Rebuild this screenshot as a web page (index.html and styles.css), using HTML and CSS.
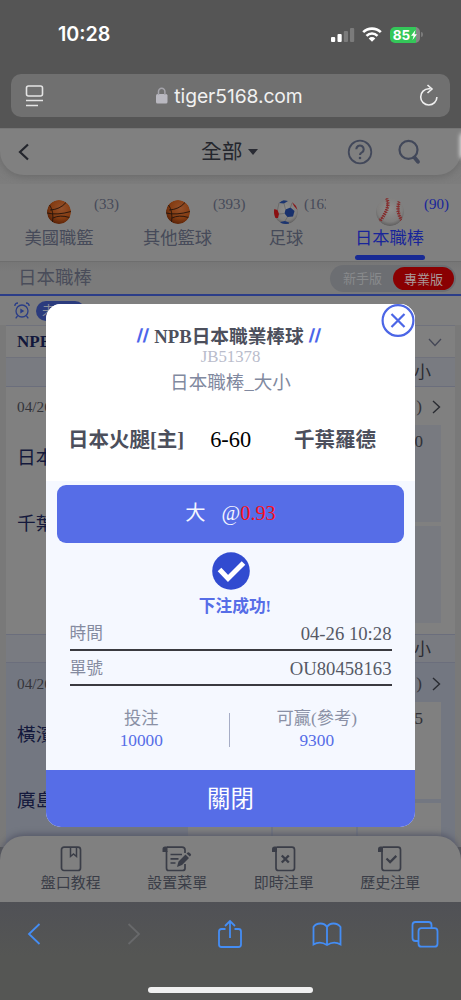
FILE: index.html
```html
<!DOCTYPE html>
<html lang="zh-Hant">
<head>
<meta charset="utf-8">
<meta name="viewport" content="width=device-width, initial-scale=1">
<title>tiger5168.com</title>
<link rel="stylesheet" href="styles.css">
</head>
<body>
<svg width="0" height="0" class="defs">
  <defs>
    <radialGradient id="orange" cx=".6" cy=".35" r=".7"><stop offset="0" stop-color="#94502a"/><stop offset=".6" stop-color="#843c12"/><stop offset="1" stop-color="#541f06"/></radialGradient>
    <radialGradient id="ivory" cx=".5" cy=".4" r=".6"><stop offset="0" stop-color="#8f8e8d"/><stop offset=".75" stop-color="#7f7e7d"/><stop offset="1" stop-color="#5f5e5e"/></radialGradient>
    <clipPath id="round"><circle cx="12" cy="12" r="12"/></clipPath>
    <symbol id="basketball" viewBox="0 0 24 24"><g clip-path="url(#round)"><circle cx="12" cy="12" r="12" fill="url(#orange)"/><path d="M0 13Q10 15.500 24 11.500M2.500 5Q7 11 5.500 22M3 10Q13 9.500 19 2.500M6 18Q13 14.500 22.500 17.500" fill="none" stroke="#24140c" stroke-width=".9"/></g></symbol>
    <symbol id="soccer" viewBox="0 0 24 24"><g clip-path="url(#round)"><circle cx="12" cy="12" r="12" fill="url(#ivory)"/><path d="M11.500 9.500l5-2 4 3.500-1.500 5.500-5.500.5-3-3.500z" fill="#18306c"/><path d="M5 3l4-3 5 1-4 2.500zM6 22l5-1 4 1.500V24H8z" fill="#1c3570"/><path d="M0 9l3.500 1L5 14l-1 4H0z" fill="#8a1012"/><path d="M18 2l4 4 1.500 4-3.500-4z" fill="#8a1518"/><path d="M5 3L3.500 10M10 3.500l1.500 6M5 14l5 -.5M13.500 17l-2.500 4M16.500 7.500L18 3" stroke="#5d5d5d" stroke-width=".6" fill="none"/></g></symbol>
    <symbol id="baseball" viewBox="0 0 24 24"><g clip-path="url(#round)"><circle cx="12" cy="12" r="12" fill="url(#ivory)"/><g fill="none" stroke="#852b2b"><path d="M9 0Q13 8 3 20M20 3Q17 11 22 19" stroke-width=".8"/><path d="M9 0Q13 8 3 20M20 3Q17 11 22 19" stroke-width="3" stroke-dasharray="1 1"/></g></g></symbol>
    <symbol id="sheet" viewBox="0 0 24 26"><path d="M5 1.200H20a2.500 2.500 0 0 1 2.500 2.500V22a2.500 2.500 0 0 1-2.500 2.500H6.500A2.500 2.500 0 0 1 4 22V5" fill="none" stroke="#3a3d47" stroke-width="1.700"/><path d="M0 6V3Q0 .5 2.500 .5H5V6z" fill="#3a3d47"/></symbol>
  </defs>
</svg>
<div class="phone">
  <div class="status">
    <span class="clock">10:28</span>
    <div class="signals">
      <svg width="24" height="16" viewBox="0 0 24 16"><g fill="#fff"><rect x="0" y="10" width="4.200" height="5" rx="1"/><rect x="6.500" y="7" width="4.200" height="8" rx="1"/></g><g fill="#7b7b7b"><rect x="12.800" y="4" width="4.200" height="11" rx="1"/><rect x="19" y="1" width="4.200" height="14" rx="1"/></g></svg>
      <svg class="wifi" width="20" height="15" viewBox="0 0 20 15"><g fill="none" stroke="#fff" stroke-width="2.600"><path d="M1.200 5.200a12.500 12.500 0 0 1 17.600 0"/><path d="M4.500 8.800a7.800 7.800 0 0 1 11 0"/></g><path d="M10 14.800l-3.300-3.300a4.600 4.600 0 0 1 6.600 0z" fill="#fff"/></svg>
      <span class="battery">85<svg width="6" height="10" viewBox="0 0 6 10"><path d="M4.500 0L0 5.700h2.600L1.500 10 6 4.300H3.400z" fill="#fff"/></svg></span><i class="nub"></i>
    </div>
  </div>
  <div class="address">
    <svg width="20" height="22" viewBox="0 0 20 22" fill="none" stroke="#e4e4e4" stroke-width="1.600"><rect x="1.500" y="1" width="16" height="10" rx="2"/><path d="M1 15.500H18M1 20.500H13"/></svg>
    <div class="host"><svg width="12" height="17" viewBox="0 0 12 17"><rect x="0" y="7" width="11.500" height="9.500" rx="1.500" fill="#b9b8c0"/><path d="M2.500 8V4.500a3.200 3.200 0 0 1 6.400 0V8" fill="none" stroke="#a5a4ab" stroke-width="1.500"/></svg><span>tiger5168.com</span></div>
    <svg width="20" height="23" viewBox="0 0 20 23" fill="none" stroke="#efefef" stroke-width="1.600"><path d="M11.500 4.800H9.800a8.100 8.100 0 1 0 8.100 8.100"/><path d="M8.500 1l4.500 4-4.500 4"/></svg>
  </div>

  <div class="site">
    <div class="head-wrap">
      <header class="head">
        <svg class="back" width="12" height="18" viewBox="0 0 12 18"><path d="M10 1.500L2 9l8 7.500" fill="none" stroke="#23252c" stroke-width="2.200"/></svg>
        <span class="all">全部</span><i class="caret"></i>
        <svg class="help" width="26" height="26" viewBox="0 0 26 26" fill="none" stroke="#42485a"><circle cx="13" cy="13" r="11.300" stroke-width="1.800"/><path d="M9.300 10.200a3.700 3.700 0 1 1 5.600 3.200q-1.900 1-1.900 2.600" stroke-width="2.100"/><circle cx="13" cy="19" r="1.300" fill="#42485a" stroke="none"/></svg>
        <svg width="23" height="26" viewBox="0 0 23 26" fill="none" stroke="#42485a"><circle cx="10.500" cy="10.800" r="9" stroke-width="2.200"/><path d="M16.500 18.500l3.500 4.300" stroke-width="3.800" stroke-linecap="round"/></svg>
      </header>
    </div>
    <nav class="sports">
      <div class="sport s1"><svg class="ball"><use href="#basketball"/></svg><span>美國職籃</span><em>(33)</em></div>
      <div class="sport s2"><svg class="ball"><use href="#basketball"/></svg><span>其他籃球</span><em>(393)</em></div>
      <div class="sport s3"><svg class="ball"><use href="#soccer"/></svg><span>足球</span><em>(163)</em></div>
      <div class="sport s4 on"><svg class="ball"><use href="#baseball"/></svg><span>日本職棒</span><em>(90)</em></div>
    </nav>
    <div class="section-bar"><span>日本職棒</span><div class="toggle"><span>新手版</span><b>專業版</b></div></div>
    <div class="filter">
      <svg width="16" height="17" viewBox="0 0 16 17" fill="none" stroke="#2a3d87" stroke-width="1.300"><circle cx="8" cy="9" r="6"/><path d="M.8 4Q1 1 4 1M15.200 4Q15 1 12 1M3.500 14l-1.800 2.300M12.500 14l1.800 2.300"/><path d="M6.300 6.500v5l4-2.500z" fill="#2a3d87" stroke="none"/></svg>
      <span class="pill">未開賽</span>
    </div>
    <main class="card">
      <div class="league"><b>NPB</b><svg width="14" height="9" viewBox="0 0 14 9"><path d="M1 1l6 6.500L13 1" fill="none" stroke="#444756" stroke-width="1.300"/></svg></div>
      <div class="heads">小</div>
      <section class="match">
        <div class="when"><span>04/26</span><span class="more">)<svg width="9" height="14" viewBox="0 0 9 14"><path d="M1 1l6.500 6L1 13" fill="none" stroke="#292b31" stroke-width="1.400"/></svg></span></div>
        <div class="board"><div class="teams"><span>日本火腿</span><span>千葉羅德</span></div><div class="cells"><i></i><i></i><i>0</i><i></i><i></i><i></i></div></div>
      </section>
      <div class="heads second">小</div>
      <section class="match alt">
        <div class="when"><span>04/26</span><span class="more">)<svg width="9" height="14" viewBox="0 0 9 14"><path d="M1 1l6.500 6L1 13" fill="none" stroke="#292b31" stroke-width="1.400"/></svg></span></div>
        <div class="board"><div class="teams"><span>橫濱</span><span>廣島</span></div><div class="cells"><i></i><i></i><i>5</i><i></i><i></i><i></i></div></div>
      </section>
    </main>
  </div>

  <nav class="tabs">
    <div><svg width="24" height="26" viewBox="0 0 24 26" fill="none" stroke="#3a3d47" stroke-width="1.700"><rect x="2.500" y="1.200" width="19" height="23.300" rx="2.500"/><path d="M11.500 1v9.500l3-2.500 3 2.500V1" stroke-width="1.500"/></svg><span>盤口教程</span></div>
    <div><svg class="wide" width="30" height="26" viewBox="0 0 30 26"><g fill="none" stroke="#3a3d47" stroke-width="1.700"><path d="M5 1.200H20Q23 1.200 23 4V7M23 18v4.500Q23 24.500 20.500 24.500H6.500Q4.500 24.500 4.500 22V5M8.500 8.500H20M8.500 12.800h8M8.500 17h5"/></g><path d="M.5 6V3Q.5 .5 3 .5H5.500V6zM15 21l1.500-5.500 7-7 3.500 3.500-7 7zM24.500 7.500l1.200-1q1-.6 2 .4l.9.9q1 1 .2 1.800l-1 1z" fill="#3a3d47"/></svg><span>設置菜單</span></div>
    <div><svg width="24" height="26" viewBox="0 0 24 26"><use href="#sheet"/><path d="M9.800 9.500l7 7M16.800 9.500l-7 7" stroke="#3a3d47" stroke-width="2.400"/></svg><span>即時注單</span></div>
    <div><svg width="24" height="26" viewBox="0 0 24 26"><use href="#sheet"/><path d="M8.500 12.500l3.600 3.600 6.200-6.200" fill="none" stroke="#3a3d47" stroke-width="2.200"/></svg><span>歷史注單</span></div>
  </nav>
  <footer class="browser">
    <div class="tools">
      <svg width="14" height="22" viewBox="0 0 14 22"><path d="M12.500 1L2 11l10.500 10"/></svg>
      <svg class="off" width="14" height="22" viewBox="0 0 14 22"><path d="M1.500 1L12 11 1.500 21"/></svg>
      <svg class="share" width="26" height="30" viewBox="0 0 26 30"><path d="M8.500 10H4.500Q2 10 2 12.500V25.500Q2 28 4.500 28H21.500Q24 28 24 25.500V12.500Q24 10 21.500 10H17.500M13 19V2M8 7l5-5 5 5"/></svg>
      <svg width="30" height="25" viewBox="0 0 30 25"><path d="M15 5Q13 1.500 8.500 1.500Q3.500 1.500 1.500 5V22.500Q8 18.500 15 23Q22 18.500 28.500 22.500V5Q26 1.500 21.500 1.500Q17 1.500 15 5V23"/></svg>
      <svg width="28" height="27" viewBox="0 0 28 27"><rect x="7.500" y="7.200" width="19" height="18.500" rx="3"/><path d="M7.500 20H4.500Q1.500 20 1.500 17V4Q1.500 1 4.500 1H17.500Q20.500 1 20.500 4V7"/></svg>
    </div>
    <div class="home-bar"></div>
  </footer>
  <i class="edge"></i>

  <div class="modal">
    <div class="top">
      <h1><i>//</i><span>NPB日本職業棒球</span><i>//</i></h1>
      <p class="code">JB51378</p>
      <p class="kind">日本職棒_大小</p>
      <div class="versus"><b>日本火腿[主]</b><span>6-60</span><b>千葉羅德</b></div>
    </div>
    <div class="pick"><span>大</span><span>@<em>0.93</em></span></div>
    <svg class="done" width="38" height="38" viewBox="0 0 38 38"><circle cx="19" cy="19" r="18.800" fill="#314bd0"/><path d="M7.500 17.500l8.500 9L31.500 11" fill="none" stroke="#fff" stroke-width="5"/></svg>
    <p class="ok">下注成功!</p>
    <div class="info time"><label>時間</label><span>04-26 10:28</span></div>
    <div class="info"><label>單號</label><span>OU80458163</span></div>
    <div class="sums"><div><label>投注</label><span>10000</span></div><hr><div><label>可贏(參考)</label><span>9300</span></div></div>
    <button class="close">關閉</button>
    <svg class="x" width="34" height="34" viewBox="0 0 34 34"><circle cx="17" cy="16.500" r="15.400" fill="#fff" stroke="#4c66e6" stroke-width="2.200"/><path d="M10.500 10l13 13M23.500 10l-13 13" stroke="#4c66e6" stroke-width="2.200"/></svg>
  </div>
</div>
</body>
</html>
```
FILE: styles.css
```css
* { box-sizing: border-box; }
body { margin: 0; background: #555; }
svg { display: block; flex: none; }
p, h1 { margin: 0; }
em, i { font-style: normal; }
.defs { position: absolute; }

.phone {
  position: relative;
  display: flex;
  flex-direction: column;
  width: 461px;
  height: 1000px;
  overflow: hidden;
  background: #555;
  font-family: "Liberation Serif", "Noto Sans CJK TC", serif;
}

/* Status and address bars */
.status { display: flex; justify-content: space-between; height: 74px; padding: 21px 38px 0 58px; color: #fff; font-family: Inter, sans-serif; }
.clock { font-size: 19.7px; font-weight: 600; line-height: 27px; }
.signals { display: flex; align-items: center; height: 27px; }
.wifi { margin: 0 8px 0 7px; }
.battery { display: flex; align-items: center; justify-content: center; gap: 1px; width: 30px; height: 16px; border-radius: 5px; background: linear-gradient(90deg, #34c759 85%, #858585 85%); font-size: 13.5px; font-weight: 700; line-height: 16px; }
.nub { width: 2px; height: 5px; margin-left: 1px; border-radius: 0 2px 2px 0; background: #7b7b7b; }
.address { display: flex; align-items: center; justify-content: space-between; flex: none; height: 43px; margin: 0 11px; padding: 0 11px 0 11px; border-radius: 10px; background: #707070; }
.address > svg:first-child { margin-left: 3px; }
.host { display: flex; align-items: center; gap: 6px; margin-left: -5px; color: #f1f1f1; font: 19.3px/26px Inter, sans-serif; letter-spacing: -.08px; }

/* Site behind the dialog */
.site { flex: none; height: 719px; margin-top: 11px; overflow: hidden; background: #797979; }
.head-wrap { height: 56px; background: linear-gradient(#797979, #7d7d7d); }
.head { display: flex; align-items: center; height: 47px; padding: 0 0 0 18px; border-top: 1px solid #767676; border-radius: 0 0 24px 24px; background: #808080; box-shadow: 0 2px 7px #6b6b6b; }
.all { margin-left: 171px; color: #24262d; font-size: 20.7px; line-height: 30px; }
.caret { margin: 0 88px 0 5px; border: 5.5px solid transparent; border-top: 6px solid #292b33; border-bottom: 0; transform: translateX(1px); }
.help { margin: 0 25px 0 2px; }
.sports { position: relative; display: flex; height: 78px; background: #808080; border-bottom: 1px solid #6e6e6e; color: #464a59; }
.sport { position: relative; display: flex; flex-direction: column; align-items: center; flex: none; height: 77px; padding-top: 16px; font-size: 17.3px; line-height: 26px; }
.s1 { width: 118px; }
.s2 { width: 119px; }
.s3 { width: 98px; }
.s4 { width: 109px; }
.ball { width: 24px; height: 24px; margin-bottom: 2px; }
.s4 .ball { width: 28px; height: 28px; margin: -2px 0 0; }
.sport em { position: absolute; left: 94px; top: 10px; font-size: 15px; line-height: 20px; }
.s2 em { left: 95px; }
.s3 em { left: 67px; width: 22px; overflow: hidden; }
.s4 em { left: 89px; }
.on { color: #18259a; }
.on::after { content: ""; width: 70px; height: 5px; margin-top: 3px; border-radius: 3px; background: #182a94; }
.section-bar { display: flex; align-items: center; justify-content: space-between; height: 34px; padding: 0 5px 0 18px; border-bottom: 2px solid #2b3d88; background: linear-gradient(#767676, #7b7b7b 30%); color: #4a4d5a; font-size: 18.5px; line-height: 30px; }
.toggle { display: flex; align-items: center; width: 126px; height: 27px; padding: 0 2px 0 13px; border-radius: 14px; background: #6c6e72; color: #888a8c; font-size: 13px; line-height: 25px; }
.toggle b { width: 61px; height: 23px; margin-left: auto; border-radius: 12px; background: #8a0002; color: #a99b9b; font-weight: 400; text-align: center; }
.filter { display: flex; align-items: center; gap: 6px; height: 29px; padding-left: 14px; background: #7f7f7f; }
.pill { width: 49px; height: 20px; padding-left: 6px; border-radius: 10px; background: #2b3b7d; color: #8b8f9b; font-size: 13px; line-height: 19px; white-space: nowrap; overflow: hidden; }
.card { width: 449px; margin: 0 6px; background: #808080; }
.league { display: flex; align-items: center; justify-content: space-between; height: 33px; padding: 1px 13px 0 11px; border: solid #70727c; border-width: 1px 0; color: #11173b; font-size: 17px; }
.heads { height: 29px; padding-right: 24px; border-bottom: 1px solid #6b6e7c; background: #797b81; color: #2b2c32; font-size: 17px; line-height: 29px; text-align: right; }
.second { border-top: 1px solid #6b6e7c; }
.match { height: 247px; padding: 0 14px 0 11px; }
.when { display: flex; align-items: center; justify-content: space-between; height: 38px; padding-top: 2px; color: #33343a; font-size: 15.3px; }
.more { display: flex; align-items: center; gap: 10px; font-size: 17px; }
.board { display: flex; justify-content: space-between; }
.teams { display: flex; flex-direction: column; gap: 38px; padding-top: 19px; color: #14193c; font-size: 18.7px; line-height: 28px; }
.cells { display: grid; grid-template: 97px 97px / 83px 83px 83px; gap: 4px 2px; }
.cells i { padding: 5px 18px 0 0; background: #787a80; color: #303137; font-size: 17px; line-height: 24px; text-align: right; }
.alt { height: 200px; padding-top: 1px; background: #737781; }
.alt .cells i { background: #808080; }

/* Bottom bars */
.tabs { position: relative; display: flex; flex: none; height: 66px; margin-top: -11px; padding: 10px 17.500px 0; border-radius: 24px 24px 0 0; background: #808080; box-shadow: 0 -2px 6px #555868; color: #3a3d47; }
.tabs div { display: flex; flex: 1; flex-direction: column; align-items: center; font-size: 15px; line-height: 23px; }
.browser { position: relative; flex: none; height: 98px; background: linear-gradient(#505156, #555654 55%); }
.tools { display: flex; align-items: center; height: 64px; padding-left: 27px; gap: 69px; fill: none; stroke: #448df4; stroke-width: 1.8; }
.off { margin-left: 17px; stroke: #68696b; }
.share { margin-left: 7px; }
.home-bar { width: 165px; height: 6px; margin: 21px auto 0; border-radius: 3px; background: #f0f0f0; }
.edge { position: absolute; right: -6px; top: 134px; width: 6px; height: 24px; border-radius: 3px; box-shadow: 0 0 4px 1px #e2e2e2; }

/* Bet receipt dialog */
.modal { position: absolute; left: 46px; top: 304px; display: flex; flex-direction: column; align-items: center; width: 369px; height: 523px; border-radius: 15px; overflow: hidden; background: #f5f8ff; }
.top { width: 369px; height: 177px; padding-top: 19px; background: #fff; text-align: center; }
h1 { display: flex; justify-content: center; gap: 5px; margin-right: 3px; color: #4c4f5c; font-size: 18.7px; font-weight: 700; line-height: 28px; }
h1 i { width: 12px; color: #4c66ea; font: 700 19px/26px "Liberation Sans", sans-serif; letter-spacing: .8px; transform: skewX(-6deg); }
.code { color: #b9bccb; font-size: 16.8px; line-height: 12px; }
.kind { margin-top: 6px; color: #8189a0; font-size: 18.6px; line-height: 28px; }
.versus { display: flex; align-items: center; height: 30px; margin-top: 28px; padding: 0 39px 0 22px; color: #4c4f5c; font-size: 20.5px; line-height: 30px; }
.versus span { margin: 0 auto 0 26px; color: #000; font-size: 22.4px; }
.pick { display: flex; justify-content: center; gap: 16px; width: 347px; height: 58px; margin-top: 4px; border-radius: 9px; background: #566de7; color: #f4f6ff; font-size: 20.3px; line-height: 56px; }
.pick em { color: #fa1018; }
.done { margin-top: 9px; }
.ok { margin-top: 4px; padding-left: 9px; color: #566de7; font-size: 16.7px; font-weight: 700; line-height: 26px; }
.info { display: flex; justify-content: space-between; width: 322px; height: 35px; border-bottom: 2px solid #3a3a40; color: #555965; font-size: 18.7px; line-height: 36px; }
.time { height: 31px; line-height: 28px; }
.info label { color: #858ba0; font-size: 16.7px; line-height: 35px; }
.time label { line-height: 27px; }
.sums { display: flex; align-items: center; width: 350px; margin: 22px 3px 0 0; text-align: center; color: #566de7; font-size: 17.3px; line-height: 22px; }
.sums div { flex: 1; display: flex; flex-direction: column; }
.sums label { color: #8a90a5; }
.sums hr { width: 1px; height: 34px; margin: 0; border: 0; background: #a6adc6; }
.close { width: 369px; height: 57px; margin-top: auto; padding: 0; border: 0; background: #566de7; color: #fff; font: 23.4px/56px "Liberation Serif", "Noto Sans CJK TC", serif; }
.x { position: absolute; right: 0; top: 0; }
```
